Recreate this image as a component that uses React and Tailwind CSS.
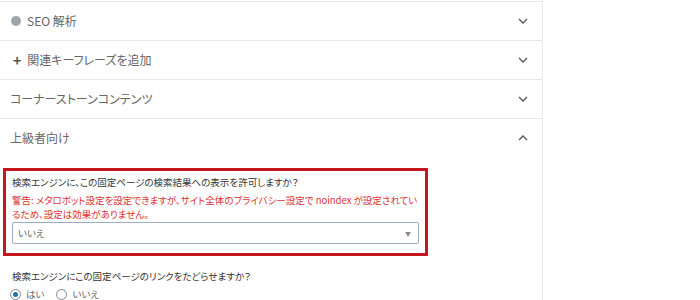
const JP = { fontFamily: '"Noto Sans CJK JP", "Noto Sans", sans-serif' }

function Chevron({ up }) {
  return (
    <svg width="10" height="6" viewBox="0 0 10 6" className="text-[#555]">
      <polyline
        points={up ? '1,5 5,1 9,5' : '1,1 5,5 9,1'}
        fill="none"
        stroke="currentColor"
        strokeWidth="1.3"
      />
    </svg>
  )
}

function Row({ icon, label }) {
  return (
    <div className="flex h-[39px] items-center justify-between border-b border-[#e6e6e6] pl-[10px] pr-[14px]">
      <div className="flex items-center gap-[6px] text-[12px] text-[#666]">
        {icon}
        <span>{label}</span>
      </div>
      <Chevron />
    </div>
  )
}

function Radio({ checked, label }) {
  return (
    <label className="flex items-center gap-[5px] text-[9.5px] leading-[14px] text-[#666]">
      <span className="flex h-[11px] w-[11px] items-center justify-center rounded-full border border-[#7e8993] bg-white">
        {checked && <span className="h-[5px] w-[5px] rounded-full bg-[#2271b1]" />}
      </span>
      {label}
    </label>
  )
}

export default function App() {
  return (
    <div className="h-[300px] w-[700px] overflow-hidden bg-white [font-feature-settings:'palt']" style={JP}>
      <div className="h-[300px] w-[543px] border-r border-[#ececec] pt-px">
        <div className="border-t border-[#e6e6e6]">
          <Row
            icon={<span className="ml-px h-[10px] w-[10px] rounded-full bg-[#a0a5aa]" />}
            label="SEO 解析"
          />
          <Row
            icon={<span className="ml-[3px] text-[14px] font-bold leading-none text-[#555]">+</span>}
            label="関連キーフレーズを追加"
          />
          <Row label="コーナーストーンコンテンツ" />
          <div className="flex h-[38px] items-center justify-between pl-[10px] pr-[14px]">
            <span className="text-[12px] text-[#666]">上級者向け</span>
            <Chevron up />
          </div>
        </div>

        <div className="ml-[3px] mt-[11px] w-[425px] border-[3px] border-[#c4161c] px-[6px] pb-[9px] pt-[4px]">
          <p className="text-[9.5px] leading-[14px] text-[#333]">
            検索エンジンに、この固定ページの検索結果への表示を許可しますか？
          </p>
          <p className="mt-[4px] text-[9.5px] leading-[14px] text-[#dc3232]">
            警告: メタロボット設定を設定できますが、サイト全体のプライバシー設定で noindex が設定されているため、設定は効果がありません。
          </p>
          <div className="mt-[1px] flex h-[22px] items-center justify-between rounded-[2px] border border-[#9fadc2] pl-[5px] pr-[7px] text-[9.5px] text-[#666]">
            <span>いいえ</span>
            <span className="text-[6px] text-[#888]">▼</span>
          </div>
        </div>

        <p className="ml-[12px] mt-[13px] text-[9.5px] leading-[14px] text-[#333]">
          検索エンジンにこの固定ページのリンクをたどらせますか？
        </p>
        <div className="ml-[10px] mt-[4px] flex items-center gap-[12px]">
          <Radio checked label="はい" />
          <Radio label="いいえ" />
        </div>
      </div>
    </div>
  )
}
